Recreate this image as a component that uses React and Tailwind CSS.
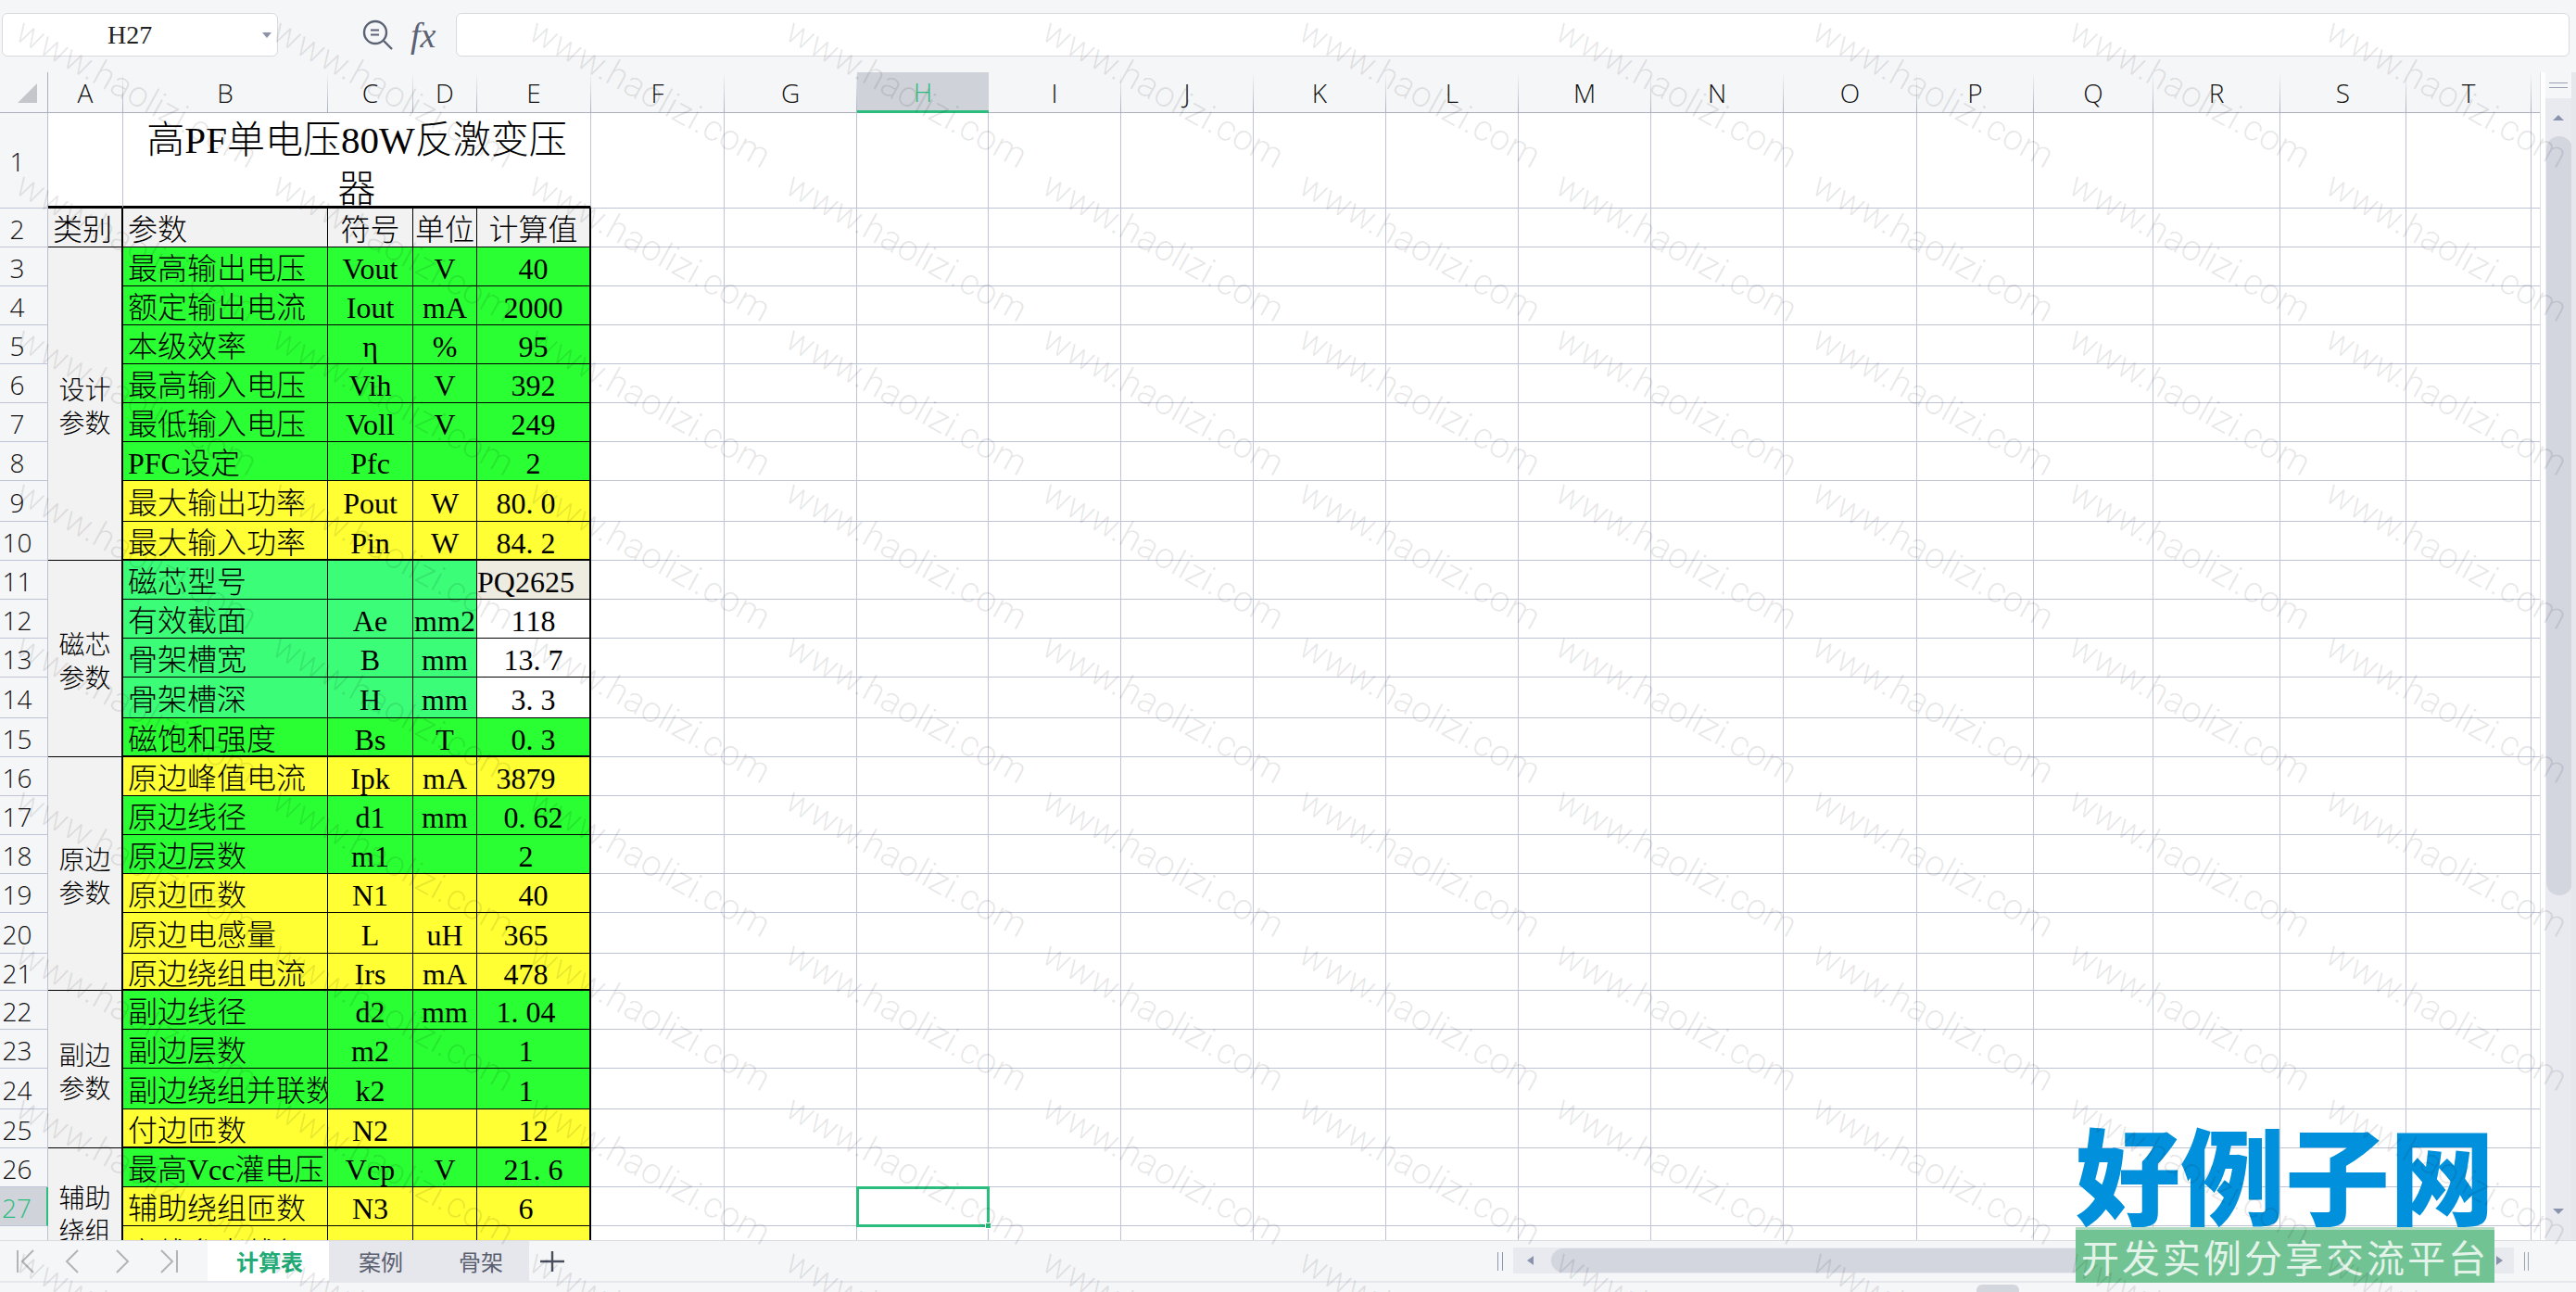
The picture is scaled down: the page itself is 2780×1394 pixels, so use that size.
import React from "react";

const G = "bg-[#29ff33]";
const Y = "bg-[#ffff33]";
const T = "bg-[#3bfd78]";

const colLetters = "ABCDEFGHIJKLMNOPQRST".split("");

// rows 3..28, name / symbol / unit / value / colour, shift = value sits a bit left of centre
const rows = [
  { n: 3, name: "最高输出电压", sym: "Vout", unit: "V", val: "40", c: G },
  { n: 4, name: "额定输出电流", sym: "Iout", unit: "mA", val: "2000", c: G },
  { n: 5, name: "本级效率", sym: "η", unit: "%", val: "95", c: G },
  { n: 6, name: "最高输入电压", sym: "Vih", unit: "V", val: "392", c: G },
  { n: 7, name: "最低输入电压", sym: "Voll", unit: "V", val: "249", c: G },
  { n: 8, name: "PFC设定", sym: "Pfc", unit: "", val: "2", c: G },
  { n: 9, name: "最大输出功率", sym: "Pout", unit: "W", val: "80.0", c: Y, shift: true },
  { n: 10, name: "最大输入功率", sym: "Pin", unit: "W", val: "84.2", c: Y, shift: true, end: true },
  { n: 11, name: "磁芯型号", sym: "", unit: "", val: "PQ2625", c: T, vc: "bg-[#eeece1]", shift: true },
  { n: 12, name: "有效截面", sym: "Ae", unit: "mm2", val: "118", c: T, vc: "bg-white" },
  { n: 13, name: "骨架槽宽", sym: "B", unit: "mm", val: "13.7", c: T, vc: "bg-white" },
  { n: 14, name: "骨架槽深", sym: "H", unit: "mm", val: "3.3", c: T, vc: "bg-white" },
  { n: 15, name: "磁饱和强度", sym: "Bs", unit: "T", val: "0.3", c: G, end: true },
  { n: 16, name: "原边峰值电流", sym: "Ipk", unit: "mA", val: "3879", c: Y, shift: true },
  { n: 17, name: "原边线径", sym: "d1", unit: "mm", val: "0.62", c: G },
  { n: 18, name: "原边层数", sym: "m1", unit: "", val: "2", c: G, shift: true },
  { n: 19, name: "原边匝数", sym: "N1", unit: "", val: "40", c: Y },
  { n: 20, name: "原边电感量", sym: "L", unit: "uH", val: "365", c: Y, shift: true },
  { n: 21, name: "原边绕组电流", sym: "Irs", unit: "mA", val: "478", c: Y, shift: true, end: true },
  { n: 22, name: "副边线径", sym: "d2", unit: "mm", val: "1.04", c: G, shift: true },
  { n: 23, name: "副边层数", sym: "m2", unit: "", val: "1", c: G, shift: true },
  { n: 24, name: "副边绕组并联数", sym: "k2", unit: "", val: "1", c: G, shift: true },
  { n: 25, name: "付边匝数", sym: "N2", unit: "", val: "12", c: Y, end: true },
  { n: 26, name: "最高Vcc灌电压", sym: "Vcp", unit: "V", val: "21.6", c: G },
  { n: 27, name: "辅助绕组匝数", sym: "N3", unit: "", val: "6", c: Y, shift: true },
  { n: 28, name: "安线参考线径", sym: "d3", unit: "", val: "0.26", c: Y },
];

const sections = {
  3: { span: "row-span-8", a: "设计", b: "参数" },
  11: { span: "row-span-5", a: "磁芯", b: "参数" },
  16: { span: "row-span-6", a: "原边", b: "参数" },
  22: { span: "row-span-4", a: "副边", b: "参数" },
  26: { span: "row-span-3", a: "辅助", b: "绕组" },
};

const emptyCols = colLetters.slice(5);

// half-width dot, the sheet font gives "." a full digit cell
const Val = ({ v }) =>
  v.split("").map((ch, i) =>
    ch === "." ? (
      <span key={i} className="inline-block w-4">
        .
      </span>
    ) : (
      <span key={i}>{ch}</span>
    )
  );

const ColHead = ({ label, active }) => (
  <div className={`flex border-b border-[#abafbd] ${active ? "bg-[#cfd2d9] border-b-[3px] border-b-[#2bbd7e]" : "bg-[#f5f6f8]"}`}>
    <div className={`flex-1 flex items-center justify-center text-[28px] font-['Open_Sans',sans-serif] ${active ? "text-[#2bbd7e]" : "text-[#111]"}`}>
      {label}
    </div>
    {!active && <div className="w-px bg-gradient-to-b from-transparent to-[#aab0c2]" />}
  </div>
);

const RowHead = ({ n, active }) => (
  <div
    className={`flex items-center justify-center pr-[14px] pt-[2px] text-[28px] font-['Open_Sans',sans-serif] border-b ${
      active
        ? "bg-[#d0d3da] text-[#2bbd7e] border-r-2 border-r-[#2bbd7e] border-b-[#bfc3d6]"
        : "bg-[#f5f6f8] text-[#111] border-r border-r-[#bcc0cf] border-b-[#bfc3d6]"
    }`}
  >
    {n}
  </div>
);

const EmptyCells = ({ row }) => (
  <>
    {emptyCols.map((c) =>
      c === "H" && row === 27 ? (
        <div key={c} className="relative border-[3px] border-[#2bbd7e] -m-px">
          <div className="absolute -right-[5px] -bottom-[5px] w-[7px] h-[7px] bg-[#2bbd7e] border border-white" />
        </div>
      ) : (
        <div key={c} className="border-r border-b border-[#bfc3d6]" />
      )
    )}
    <div className="border-b border-[#bfc3d6]" />
  </>
);

const Nav = ({ d }) => (
  <svg width="24" height="28" viewBox="0 0 24 28" fill="none" stroke="#b4b4b8" strokeWidth="2">
    <path d={d} />
  </svg>
);

export default function App() {
  return (
    <div className="relative w-[2780px] h-[1394px] overflow-hidden flex flex-col bg-[#f5f6f8]">
      {/* formula bar */}
      <div className="h-[78px] flex shrink-0 items-start pt-[14px] pl-[2px] pr-[7px] gap-0">
        <div className="w-[298px] h-[47px] bg-white border border-[#d8dae0] rounded-md flex items-center">
          <div className="flex-1 pl-[113px] text-[28px] text-[#222] font-['Liberation_Serif',serif]">H27</div>
          <div className="w-0 h-0 mr-[6px] border-x-[5px] border-x-transparent border-t-[6px] border-t-[#8c93a8]" />
        </div>
        <div className="w-[192px] h-[47px] flex items-center pl-[91px] gap-[19px]">
          <svg width="33" height="33" viewBox="0 0 33 33" fill="none" stroke="#5a6274" strokeWidth="2.4">
            <circle cx="14" cy="14" r="12" />
            <path d="M23 23l9 9" />
            <path d="M9 11.5h9M9 16.5h9" strokeWidth="2" />
          </svg>
          <span className="text-[38px] leading-none italic text-[#5a6274] font-['Liberation_Serif',serif]">fx</span>
        </div>
        <div className="flex-1 h-[47px] bg-white border border-[#d8dae0] rounded-md" />
      </div>

      <div className="flex h-[1260px] shrink-0">
        {/* sheet */}
        <div className="w-[2741px] bg-white overflow-hidden">
          <div className="grid w-[2741px] text-[32px] text-black font-light font-['Liberation_Serif','Noto_Sans_CJK_SC',serif] grid-cols-[52px_81px_221px_92px_69px_123px_144px_143px_142px_143px_143px_143px_143px_143px_143px_144px_126px_129px_137px_136px_135px_9px] grid-rows-[44px_103px_42px_42px_42px_42px_42px_42px_42px_44px_42px_42px_42px_42px_44px_42px_42px_42px_42px_42px_44px_40px_42px_42px_44px_42px_42px_42px]">
            {/* column heads */}
            <div className="flex items-end justify-end pr-[11px] pb-[10px] bg-[#f5f6f8] border-b border-r border-[#abafbd]">
              <svg width="21" height="21" viewBox="0 0 21 21">
                <path d="M21 0v21H0z" fill="#c4c6cc" />
              </svg>
            </div>
            {colLetters.map((c) => (
              <ColHead key={c} label={c} active={c === "H"} />
            ))}
            <div className="bg-[#f5f6f8] border-b border-[#abafbd]" />

            {/* row 1, title */}
            <RowHead n={1} />
            <div className="border-r border-r-[#bfc3d6] border-b-[3px] border-b-black" />
            <div className="col-span-4 overflow-hidden border-r border-r-[#bfc3d6] border-b-[3px] border-b-black text-center text-[41px] leading-[53px] pt-[3px]">
              高PF单电压80W反激变压
              <br />器
            </div>
            <EmptyCells row={1} />

            {/* row 2, table head */}
            <RowHead n={2} />
            <div className="flex items-center pl-[5px] pt-[4px] bg-[#f2f2f2] border-r-2 border-r-black border-b border-b-black">类别</div>
            <div className="flex items-center pl-[5px] pt-[4px] bg-[#f2f2f2] border-r border-b border-black">参数</div>
            <div className="flex items-center justify-center pt-[4px] bg-[#f2f2f2] border-r border-b border-black">符号</div>
            <div className="flex items-center justify-center pt-[4px] bg-[#f2f2f2] border-r border-b border-black">单位</div>
            <div className="flex items-center justify-center pt-[4px] bg-[#f2f2f2] border-r-2 border-r-black border-b border-b-black">计算值</div>
            <EmptyCells row={2} />

            {rows.map((r) => {
              const sec = sections[r.n];
              const b = r.end ? "border-b-2" : "border-b";
              return (
                <React.Fragment key={r.n}>
                  <RowHead n={r.n} active={r.n === 27} />
                  {sec && (
                    <div className={`${sec.span} flex flex-col items-center justify-center pt-[8px] bg-[#f2f2f2] border-r-2 border-r-black border-b border-b-black text-[28px] leading-[36px]`}>
                      <span>{sec.a}</span>
                      <span>{sec.b}</span>
                    </div>
                  )}
                  <div className={`${r.c} flex items-center pl-[5px] pt-[5px] overflow-hidden whitespace-nowrap border-r ${b} border-black`}>{r.name}</div>
                  <div className={`${r.c} flex items-center justify-center pt-[5px] border-r ${b} border-black`}>{r.sym}</div>
                  <div className={`${r.c} flex items-center justify-center pt-[5px] border-r ${b} border-black`}>{r.unit}</div>
                  <div className={`${r.vc || r.c} flex items-center justify-center pt-[5px] whitespace-nowrap border-r-2 border-r-black ${b} border-b-black ${r.shift ? "pr-4" : ""}`}>
                    <Val v={r.val} />
                  </div>
                  <EmptyCells row={r.n} />
                </React.Fragment>
              );
            })}
          </div>
        </div>

        {/* vertical scrollbar */}
        <div className="w-[39px] flex bg-white">
          <div className="w-[6px] border-l border-[#dfe1e6] bg-white" />
          <div className="w-[28px] flex flex-col bg-[#f5f6f8]">
            <div className="h-[28px] flex items-center justify-center">
              <div className="w-[20px] h-[6px] border-y border-[#9aa0b0]" />
            </div>
            <div className="flex-1 flex flex-col items-center bg-[#e9eaef]">
              <div className="h-[41px] flex items-center justify-center shrink-0">
                <div className="w-0 h-0 border-x-[6px] border-x-transparent border-b-[6px] border-b-[#8a95ad]" />
              </div>
              <div className="w-full flex-1 bg-[#d3d6df] rounded-t-[14px] rounded-b-[14px] mb-[334px] ml-px" />
              <div className="h-[38px] flex items-start justify-center shrink-0 pt-[4px]">
                <div className="w-0 h-0 border-x-[6px] border-x-transparent border-t-[6px] border-t-[#8a95ad]" />
              </div>
            </div>
          </div>
          <div className="w-[5px] bg-[#e6e7ec]" />
        </div>
      </div>

      {/* sheet tabs */}
      <div className="h-[44px] shrink-0 flex items-stretch border-t border-[#dadce2]">
        <div className="w-[224px] flex items-center pl-[15px] gap-[28px]">
          <Nav d="M4 2v24M21 2L9 14l12 12" />
          <Nav d="M17 2L5 14l12 12" />
          <Nav d="M7 2l12 12L7 26" />
          <Nav d="M3 2l12 12L3 26M20 2v24" />
        </div>
        <div className="w-[131px] pl-[3px] bg-white flex items-center justify-center text-[24px] font-bold text-[#22ab76] font-['Noto_Sans_CJK_SC',sans-serif]">计算表</div>
        <div className="w-[112px] bg-[#e6e7ec] flex items-center justify-center text-[24px] text-[#5a6070] font-['Noto_Sans_CJK_SC',sans-serif]">案例</div>
        <div className="w-[104px] bg-[#e6e7ec] flex items-center justify-center text-[24px] text-[#5a6070] font-['Noto_Sans_CJK_SC',sans-serif]">骨架</div>
        <div className="w-[1062px] flex items-center pl-[11px]">
          <svg width="28" height="24" viewBox="0 0 28 24" stroke="#4a4f5e" strokeWidth="2.4">
            <path d="M1 12h26M14 1v22" />
          </svg>
          <div className="ml-auto w-[6px] h-[20px] border-x border-[#8f97ae] mr-[11px]" />
        </div>
        <div className="w-[1080px] h-[28px] mt-[7px] flex items-center bg-[#e9eaef]">
          <div className="w-0 h-0 ml-[15px] border-y-[5px] border-y-transparent border-r-[7px] border-r-[#8a95ad]" />
          <div className="ml-[19px] flex-1 h-[26px] bg-[#d3d6df] rounded-l-[13px] mr-[60px]" />
          <div className="w-0 h-0 mr-[12px] border-y-[5px] border-y-transparent border-l-[7px] border-l-[#8a95ad]" />
        </div>
        <div className="flex-1 flex items-center pl-[11px]">
          <div className="w-[5px] h-[20px] border-x border-[#9fa4b5]" />
        </div>
      </div>
      <div className="flex-1 border-t-2 border-[#e6e7ec] flex items-end pl-[2133px]">
        <div className="w-[46px] h-[8px] bg-[#d4d6de] rounded-t-md" />
      </div>

      {/* site logo stamped over the sheet */}
      <div className="absolute left-[2240px] top-[1204px] w-[452px] flex flex-col">
        <div className="h-[120px] flex items-center justify-center text-[113px] leading-none font-black text-[#0090dc] whitespace-nowrap font-['Noto_Sans_CJK_SC',sans-serif]">
          好例子网
        </div>
        <div className="h-[60px] bg-[#72c393] border-t-[3px] border-[#b4dcc4] flex items-center justify-center text-[41px] leading-none tracking-[3px] text-white/80 whitespace-nowrap font-['Noto_Sans_CJK_SC',sans-serif]">
          开发实例分享交流平台
        </div>
      </div>

      {/* watermark */}
      <div className="absolute inset-0 overflow-hidden pointer-events-none grid grid-cols-[repeat(11,277px)] auto-rows-[166px] pl-[31px] pt-[11px]">
        {Array.from({ length: 99 }).map((_, i) => (
          <span key={i} className="block w-max h-max origin-top-left rotate-[29deg] text-[39px] leading-[44px] font-light text-black/[.09] font-['Roboto',sans-serif]">
            www.haolizi.com
          </span>
        ))}
      </div>
    </div>
  );
}
